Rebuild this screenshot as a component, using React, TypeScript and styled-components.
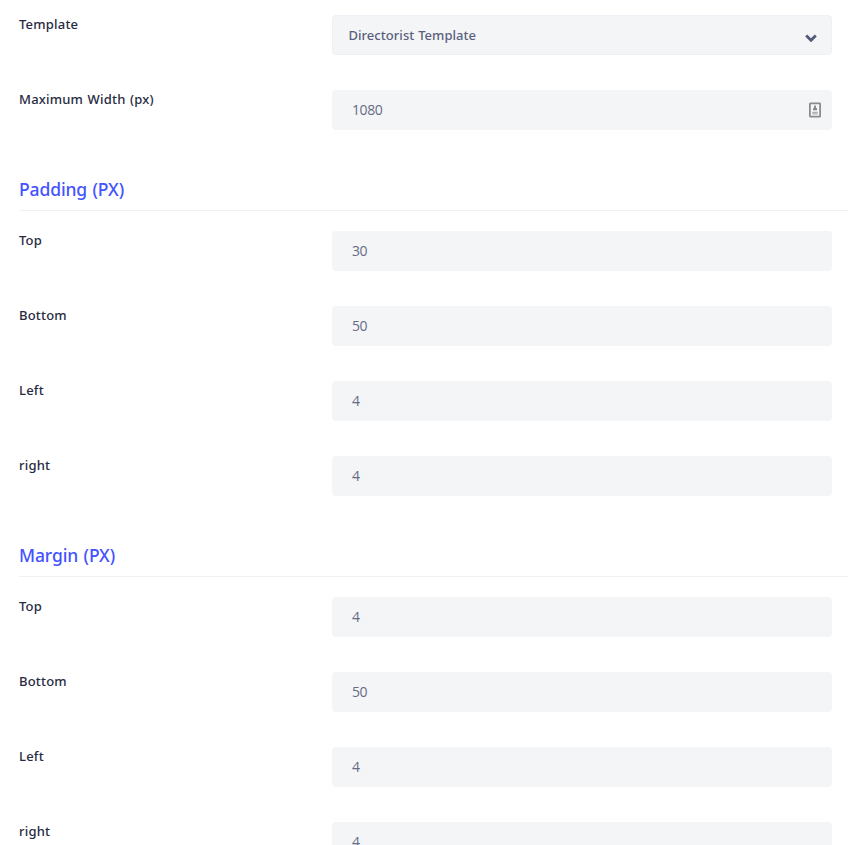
import React from "react";
import styled, { createGlobalStyle } from "styled-components";

const GlobalStyle = createGlobalStyle`
  * { box-sizing: border-box; }
  html, body { margin: 0; background: #fff; }
  body { height: 845px; overflow: hidden; font-family: "Noto Sans", "Open Sans", sans-serif; }
`;

const Page = styled.main`
  height: 845px;
  overflow: hidden;
  padding: 15px 0 0 19px;
`;

const Row = styled.div`
  display: grid;
  grid-template-columns: 313px 500px;
  height: 40px;
  margin-bottom: 35px;
`;

const Label = styled.label`
  font-size: 13px;
  font-weight: 500;
  line-height: 18px;
  letter-spacing: 0.2px;
  word-spacing: 0.9px;
  color: #272b41;
  white-space: nowrap;
`;

const Field = styled.div`
  display: flex;
  align-items: center;
  height: 40px;
  padding: 0 11px 0 20px;
  border-radius: 4px;
  background: #f4f5f7;
`;

const SelectField = styled(Field)`
  justify-content: space-between;
  padding: 0 13px 0 15.5px;
  border: 1px solid #eff0f5;
  color: #5a5f7d;
  font-size: 13px;
  font-weight: 500;
  letter-spacing: 0.04px;
  word-spacing: 0.5px;
`;

const Input = styled.input`
  flex: 1;
  min-width: 0;
  padding: 0;
  border: 0;
  outline: 0;
  background: transparent;
  color: #666b86;
  font-family: "Open Sans", "Noto Sans", sans-serif;
  font-size: 14px;
  font-weight: 400;
  letter-spacing: -0.4px;
  line-height: 20px;
`;

const Heading = styled.h3`
  height: 46px;
  margin: 0 0 20px;
  border-bottom: 1px solid #f1f1f4;
  color: #4353ff;
  font-size: 17.5px;
  font-weight: 500;
  line-height: 48px;
  letter-spacing: -0.12px;
  word-spacing: 1px;
`;

const Chevron = styled.svg`
  display: block;
  margin-top: 5px;
`;

const ContactIcon = () => (
  <svg width="12" height="16" viewBox="0 0 12 16" aria-hidden="true">
    <rect x="0.9" y="1.4" width="10.2" height="13.2" rx="0.4" fill="#f8f8f8" stroke="#8b8c8e" strokeWidth="1.8" />
    <path d="M6 3.6v2.4" stroke="#858688" strokeWidth="1.8" />
    <path d="M4 8.2V7c0-1 .8-1.5 2-1.5s2 .5 2 1.5v1.2z" fill="#858688" />
    <path d="M3.3 10.3h5.4M3.3 11.8h5.4" stroke="#adadaf" strokeWidth="1.2" />
  </svg>
);

type Setting = { label: string; value: string };

const padding: Setting[] = [
  { label: "Top", value: "30" },
  { label: "Bottom", value: "50" },
  { label: "Left", value: "4" },
  { label: "right", value: "4" },
];

const margin: Setting[] = [
  { label: "Top", value: "4" },
  { label: "Bottom", value: "50" },
  { label: "Left", value: "4" },
  { label: "right", value: "4" },
];

const NumberRow = ({ label, value, icon }: Setting & { icon?: React.ReactNode }) => (
  <Row>
    <Label>{label}</Label>
    <Field>
      <Input defaultValue={value} aria-label={label} />
      {icon}
    </Field>
  </Row>
);

export default function App() {
  return (
    <>
      <GlobalStyle />
      <Page>
        <Row>
          <Label>Template</Label>
          <SelectField role="combobox">
            Directorist Template
            <Chevron width="14" height="10" viewBox="0 0 14 10" fill="none" aria-hidden="true">
              <path d="M2.2 2.5 7 7.2l4.8-4.7" stroke="#515878" strokeWidth="2.8" />
            </Chevron>
          </SelectField>
        </Row>
        <NumberRow label="Maximum Width (px)" value="1080" icon={<ContactIcon />} />
        <Heading>Padding (PX)</Heading>
        {padding.map((s) => <NumberRow key={s.label} {...s} />)}
        <Heading>Margin (PX)</Heading>
        {margin.map((s) => <NumberRow key={s.label} {...s} />)}
      </Page>
    </>
  );
}
